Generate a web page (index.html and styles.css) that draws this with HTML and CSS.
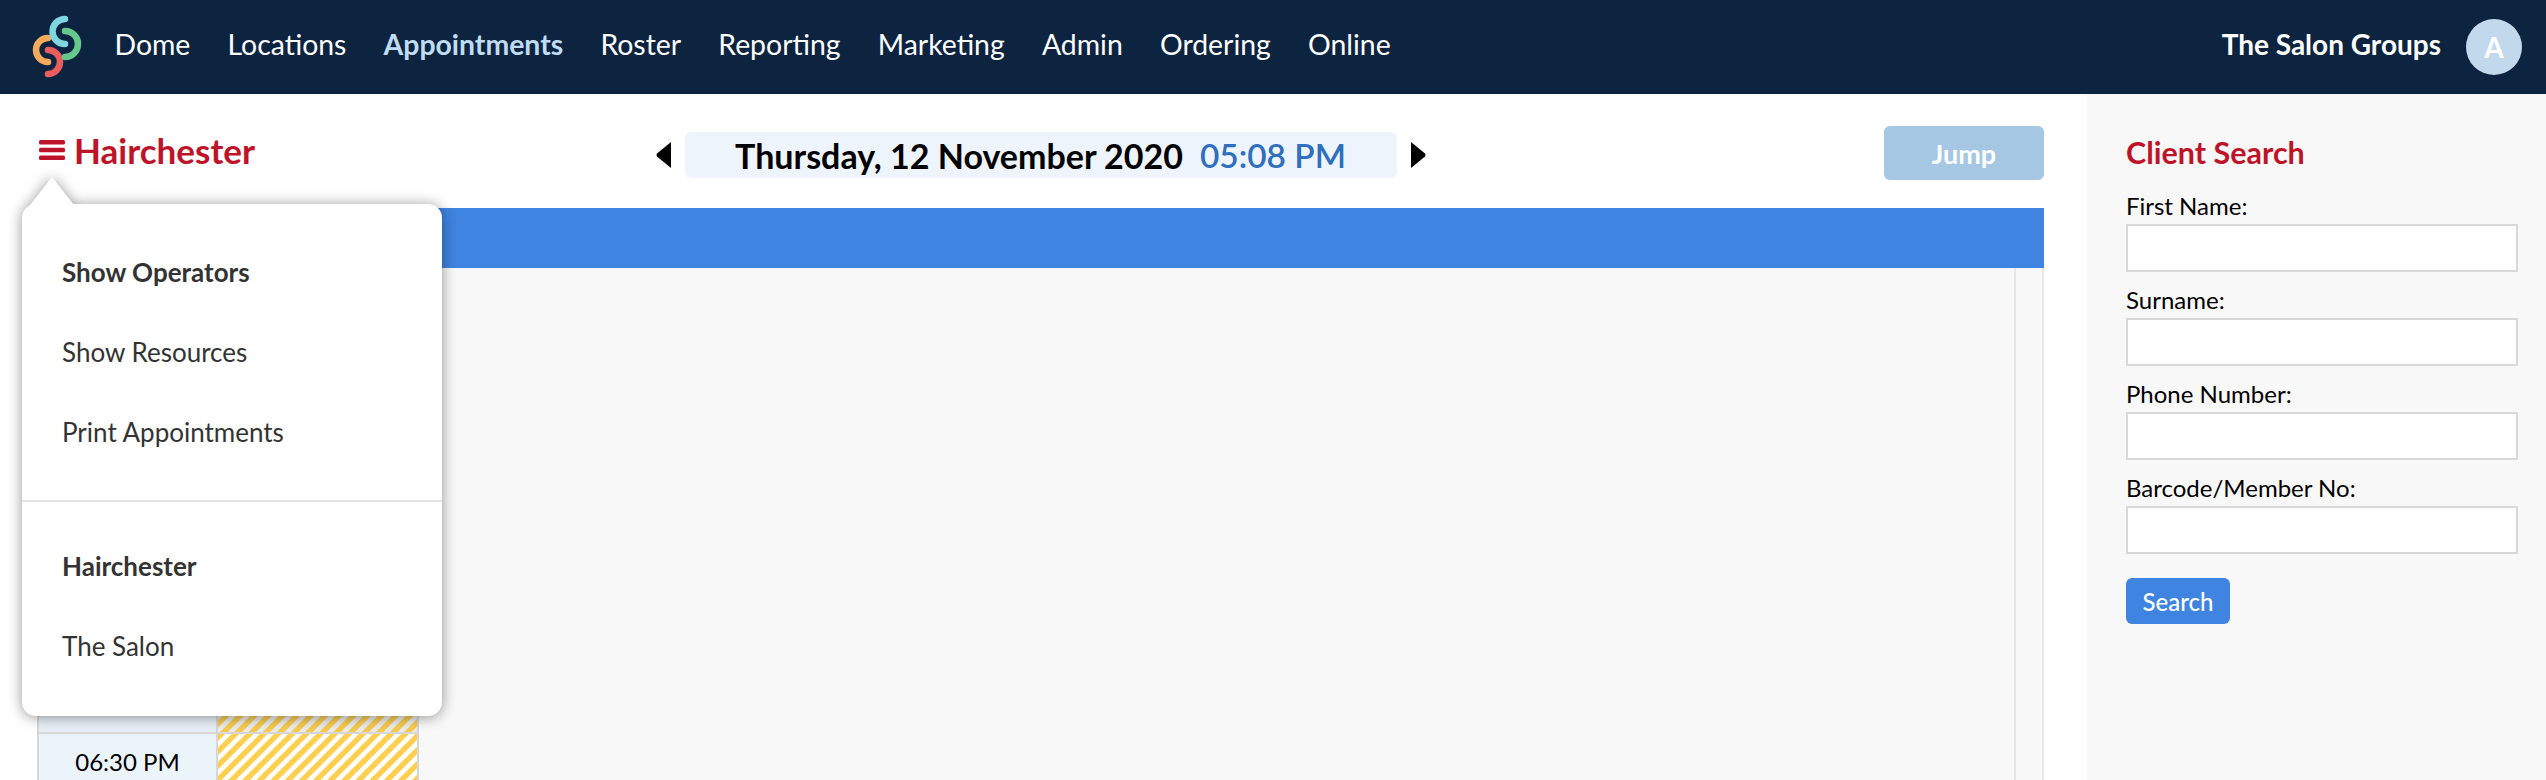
FILE: index.html
```html
<!DOCTYPE html>
<html lang="en">
<head>
<meta charset="utf-8">
<title>Appointments</title>
<link rel="stylesheet" href="styles.css">
</head>
<body>
<header class="topbar">
  <svg class="logo" viewBox="30 12 54 66" width="54" height="66" aria-hidden="true">
    <g fill="none" stroke-width="6.5" stroke-linecap="round">
      <path d="M48 36A12 12 0 0 0 48 60" stroke="#f5a95b"/>
      <path d="M48 48A12 12 0 0 1 48 72" stroke="#ea5d5f"/>
      <path d="M65 29A13 13 0 0 1 65 55" stroke="#67c88d"/>
      <path d="M65 17A12.5 12.5 0 0 0 65 42" stroke="#7fd5e0"/>
    </g>
  </svg>
  <nav class="nav">
    <a>Dome</a><a>Locations</a><a class="active">Appointments</a><a>Roster</a><a>Reporting</a><a>Marketing</a><a>Admin</a><a>Ordering</a><a>Online</a>
  </nav>
  <div class="account">
    <span class="group">The Salon Groups</span>
    <span class="avatar">A</span>
  </div>
</header>
<div class="page">
  <main class="main">
    <div class="toolbar">
      <div class="location">
        <svg class="burger" viewBox="0 0 26 22" width="26" height="22" aria-hidden="true">
          <rect y="1" width="26" height="4.6" rx="1.5"/><rect y="8.7" width="26" height="4.6" rx="1.5"/><rect y="16.4" width="26" height="4.6" rx="1.5"/>
        </svg>
        <span>Hairchester</span>
      </div>
      <div class="datenav">
        <svg class="arrow" viewBox="0 0 15 26" width="15" height="26" aria-hidden="true"><path d="M15 0V26L1 14.5Q0 13 1 11.5Z"/></svg>
        <div class="date"><span>Thursday, 12 November 2020</span><span class="time">05:08 PM</span></div>
        <svg class="arrow" viewBox="0 0 15 26" width="15" height="26" aria-hidden="true"><path d="M0 0V26L14 14.5Q15 13 14 11.5Z"/></svg>
      </div>
      <div class="jumpwrap"><button class="jump">Jump</button></div>
    </div>
    <div class="bluebar"></div>
    <div class="schedule">
      <div class="column">
        <div class="row past"><div class="timecell"></div><div class="slot"></div></div>
        <div class="row"><div class="timecell">06:30 PM</div><div class="slot"></div></div>
      </div>
      <div class="gutter"></div>
    </div>
    <div class="menu">
      <ul class="menulist">
        <li class="strong">Show Operators</li>
        <li>Show Resources</li>
        <li>Print Appointments</li>
      </ul>
      <ul class="menulist second">
        <li class="strong">Hairchester</li>
        <li>The Salon</li>
      </ul>
    </div>
  </main>
  <aside class="sidebar">
    <h2 class="sidetitle">Client Search</h2>
    <label class="field">First Name:<input class="input" type="text"></label>
    <label class="field">Surname:<input class="input" type="text"></label>
    <label class="field">Phone Number:<input class="input" type="text"></label>
    <label class="field">Barcode/Member No:<input class="input" type="text"></label>
    <button class="search">Search</button>
  </aside>
</div>
</body>
</html>
```
FILE: styles.css
```css
* { box-sizing: border-box; }
html, body { margin: 0; height: 780px; overflow: hidden; }
body { font-family: Lato, "Open Sans", sans-serif; background: #fff; color: #000; }

.topbar { height: 94px; background: #0d2440; display: flex; align-items: center; padding: 0 24px 0 30px; color: #fff; }
.logo { display: block; flex: none; }
.nav { display: flex; gap: 37.2px; margin-left: 30.5px; margin-top: -7px; font-size: 28.4px; }
.nav .active { color: #c0dcf2; font-weight: 700; }
.account { margin-left: auto; display: flex; align-items: center; gap: 25px; }
.group { font-size: 28px; font-weight: 700; margin-top: -7px; }
.avatar { width: 56px; height: 56px; border-radius: 50%; background: #c2d9ed; display: flex; align-items: center; justify-content: center; font-size: 28px; font-weight: 700; }

.page { display: flex; height: 686px; }
.main { position: relative; flex: 1; min-width: 0; padding: 32px 43px 0 37px; display: flex; flex-direction: column; }
.toolbar { display: grid; grid-template-columns: 1fr auto 1fr; align-items: center; height: 54px; margin-bottom: 28px; }
.location { display: flex; align-items: center; gap: 9px; padding-left: 2px; margin-top: -6px; font-size: 35px; font-weight: 700; color: #bd1429; }
.burger { fill: #bd1429; display: block; }
.datenav { display: flex; align-items: center; gap: 14px; margin-top: 4px; }
.arrow { display: block; fill: #000; }
.date { width: 712px; height: 46px; background: #edf4fb; border-radius: 6px; display: flex; align-items: center; justify-content: center; gap: 17px; font-size: 34px; font-weight: 700; }
.time { color: #2f6fbd; font-size: 33.4px; font-weight: 600; }
.jumpwrap { display: flex; justify-content: flex-end; }
.jump { width: 160px; height: 54px; border: 0; border-radius: 6px; background: #a5c7e4; color: #fff; font: 700 27px Lato, sans-serif; }

.bluebar { height: 60px; background: #3f84e0; flex: none; }
.schedule { flex: 1; min-height: 0; overflow: hidden; background: #f8f8f8; display: flex; border-right: 2px solid #e6e6e6; }
.column { width: 382px; flex: none; border-left: 2px solid #d6d6d6; border-right: 2px solid #d6d6d6; }
.row { display: flex; height: 54px; }
.row.past { height: 466px; border-bottom: 2px solid #d6d6d6; }
.timecell { width: 179px; flex: none; background: #ebf3fb; border-right: 2px solid #d6d6d6; display: flex; align-items: center; justify-content: center; font-size: 24px; }
.slot { flex: 1; background: repeating-linear-gradient(135deg, #ffcf50 0, #ffcf50 4.6px, #fff 5.4px, #fff 9.2px, #ffcf50 10px); }
.past .slot { background: repeating-linear-gradient(135deg, #f7cb50 0, #f7cb50 4.6px, #ececec 5.4px, #ececec 9.2px, #f7cb50 10px); }
.past .timecell { background: #e8eff7; }
.gutter { margin-left: auto; width: 28px; border-left: 2px solid #e6e6e6; }

.menu { position: absolute; left: 22px; top: 110px; width: 420px; height: 512px; background: #fff; border-radius: 14px; color: #333; font-size: 26px; filter: drop-shadow(0 1px 7px rgba(0,0,0,.42)); }
.menu::before { content: ""; position: absolute; left: 8px; top: -27px; border-left: 22px solid transparent; border-right: 22px solid transparent; border-bottom: 28px solid #fff; }
.menulist { list-style: none; margin: 0; padding: 28px 0 28px; }
.menulist li { height: 80px; line-height: 80px; padding-left: 40px; }
.menulist.second { border-top: 2px solid #e3e3e3; padding-top: 24px; }
.strong { font-weight: 700; }

.sidebar { width: 459px; flex: none; background: #f8f8f8; padding: 38px 28px 0 39px; }
.sidetitle { margin: 0 0 21px; font-size: 30.5px; line-height: 40px; font-weight: 700; color: #bd1429; }
.field { display: block; font-size: 24px; line-height: 26px; margin-bottom: 15px; }
.input { display: block; width: 100%; height: 48px; margin: 5px 0 0; border: 2px solid #d8d8d8; background: #fff; border-radius: 0; padding: 0; }
.search { display: block; margin-top: 24px; width: 104px; height: 46px; border: 0; border-radius: 6px; background: #3f84e0; color: #fff; font: 500 24px Lato, sans-serif; }
```
